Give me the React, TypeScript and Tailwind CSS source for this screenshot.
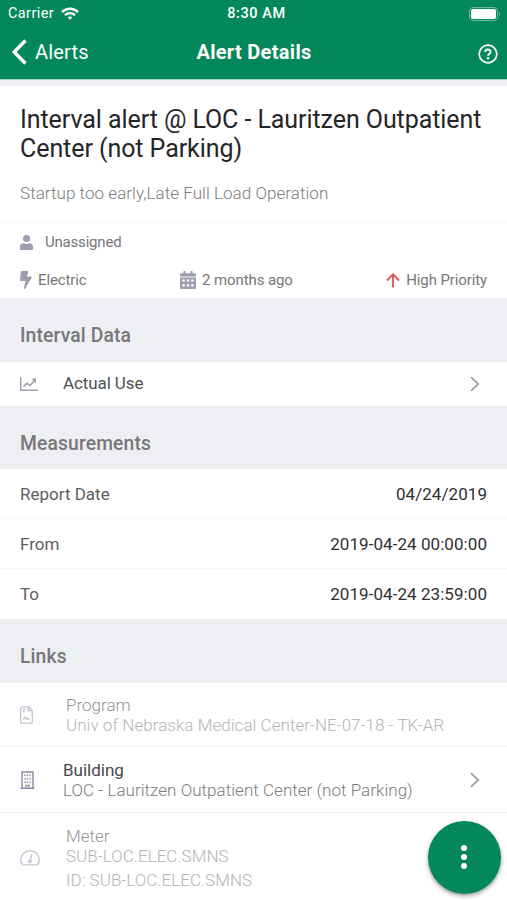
import React from 'react';

interface SectionHeaderProps {
  title: string;
  className: string;
}

interface MeasurementProps {
  label: string;
  value: string;
}

interface LinkRowProps {
  icon: React.ReactNode;
  title: string;
  lines: string[];
  className: string;
  disabled?: boolean;
}

const measurements: MeasurementProps[] = [
  { label: 'Report Date', value: '04/24/2019' },
  { label: 'From', value: '2019-04-24 00:00:00' },
  { label: 'To', value: '2019-04-24 23:59:00' },
];

const WifiIcon = () => (
  <svg width="18" height="13" viewBox="0 0 18 13" fill="none" stroke="#fff" strokeWidth="2.4">
    <path d="M1 5c4.7-4.4 11.3-4.4 16 0" />
    <path d="M4 8.2c3-2.7 7-2.7 10 0" />
    <path d="M6.6 10.3c1.5-1.2 3.3-1.2 4.8 0L9 12.8z" fill="#fff" stroke="none" />
  </svg>
);

const BatteryIcon = () => (
  <svg width="32" height="14" viewBox="0 0 32 14" fill="none">
    <rect x=".5" y=".5" width="28" height="13" rx="3.5" stroke="#6fb79c" />
    <rect x="2" y="2" width="25" height="10" rx="2" fill="#fff" />
    <path d="M30 5c1.6.5 1.6 3.5 0 4z" fill="#6fb79c" />
  </svg>
);

const HelpIcon = () => (
  <svg width="20" height="20" viewBox="0 0 20 20" fill="none" stroke="#fff">
    <circle cx="10" cy="10" r="8.8" strokeWidth="1.7" />
    <path d="M7.2 8C7.3 4.6 12.8 4.9 12.6 8c-.1 1.7-2.5 1.8-2.5 3.7" strokeWidth="2" />
    <circle cx="10.1" cy="14.2" r="1.3" fill="#fff" stroke="none" />
  </svg>
);

const PersonIcon = () => (
  <svg width="13" height="15" viewBox="0 0 13 15" fill="#9d9db1">
    <circle cx="6.5" cy="3.6" r="3.5" />
    <path d="M0 14.3v-2.5C0 9.6 1.5 8.3 3.6 8.3c1.8.8 4 .8 5.8 0 2.1 0 3.6 1.3 3.6 3.5v2.5c0 .4-.3.7-.7.7H.7c-.4 0-.7-.3-.7-.7z" />
  </svg>
);

const BoltIcon = () => (
  <svg width="12" height="18" viewBox="0 0 12 18" fill="#9d9db1">
    <path d="M1.5 0h6c.6 0 .9.4.7 1L7 5.4h4c.7 0 1 .6.7 1.1L5.3 17.4c-.5.9-1.6.5-1.4-.4L5.4 10H1C.3 10 0 9.6.1 9L.8.7C.9.2 1.1 0 1.5 0z" />
  </svg>
);

const CalendarIcon = () => (
  <svg width="16" height="18" viewBox="0 0 16 18" fill="#9d9db1">
    <path d="M1.5 2.3h2V.5c0-.3.2-.5.5-.5h1c.3 0 .5.2.5.5v1.8h5V.5c0-.3.2-.5.5-.5h1c.3 0 .5.2.5.5v1.8h2c.9 0 1.5.7 1.5 1.6v1.5H0V3.9c0-.9.6-1.6 1.5-1.6z" />
    <path
      fillRule="evenodd"
      d="M0 6.5h16v9.9c0 .9-.7 1.6-1.6 1.6H1.6C.7 18 0 17.3 0 16.4zM2.3 8.6v2.2h2.5V8.6zM6.75 8.6v2.2h2.5V8.6zM11.2 8.6v2.2h2.5V8.6zM2.3 13.2v2.2h2.5v-2.2zM6.75 13.2v2.2h2.5v-2.2zM11.2 13.2v2.2h2.5v-2.2z"
    />
  </svg>
);

const ArrowUpIcon = () => (
  <svg width="14" height="15" viewBox="0 0 14 15" fill="none" stroke="#dc5550" strokeWidth="1.8">
    <path d="M7 14.5V1.5M1 7.5l6-6.2 6 6.2" />
  </svg>
);

const ChartIcon = () => (
  <svg width="18" height="14" viewBox="0 0 18 14" fill="none" stroke="#9d9da8" strokeWidth="1.5">
    <path d="M.7 0v13.2H18" />
    <path d="M3.5 9.8l3.5-3.5 3 2.2 4.5-4.7" />
    <path d="M11.3 1.5H16v4.7z" fill="#9d9da8" stroke="none" />
  </svg>
);

const ProgramIcon = () => (
  <svg width="13" height="18" viewBox="0 0 13 18" fill="none" stroke="#9d9db1" strokeWidth="1.3">
    <path d="M8.3.8H2C1.2.8.7 1.3.7 2v14c0 .8.5 1.2 1.3 1.2h9c.8 0 1.3-.5 1.3-1.2V4.8zM8.3.8v4h4" />
    <path d="M2.7 3.5h3M2.7 5.7h2" />
    <path d="M3.3 13.8l1.9-2.6 1.6 2.1 1-.9 1.3 1.4" />
  </svg>
);

const BuildingIcon = () => (
  <svg width="15" height="18" viewBox="0 0 15 18" fill="none" stroke="#8c8ca4">
    <path d="M2 17V1h11v16M.5 17.2h14" strokeWidth="1.4" />
    <path d="M5 3.5v8.8M7.500 3.5v8.8M10 3.5v8.8" strokeWidth="1.4" strokeDasharray="1.5 2" />
    <path d="M6 17v-2.7h3V17" strokeWidth="1.2" />
  </svg>
);

const MeterIcon = () => (
  <svg width="20" height="16" viewBox="0 0 20 16" fill="none" stroke="#9d9db1" strokeWidth="1.4">
    <path d="M3 14.9C1.4 13.5.7 11.8.7 9.9.7 4.8 4.8.7 10 .7s9.3 4.1 9.3 9.2c0 1.9-.7 3.6-2.3 5z" />
    <path d="M11.9 4.2l-1.7 6.3" strokeWidth="1.5" />
    <circle cx="9.8" cy="11.5" r="1.3" />
  </svg>
);

const Chevron = () => (
  <svg width="10" height="16" viewBox="0 0 10 16" fill="none" stroke="#a0a0a0" strokeWidth="1.8">
    <path d="M1 1.2L8.2 8 1 14.8" />
  </svg>
);

const SectionHeader: React.FC<SectionHeaderProps> = ({ title, className }) => (
  <div className={`bg-[#edeff3] px-5 ${className}`}>
    <h2 className="pt-[26px] text-[19.3px] leading-6 font-medium tracking-[0.14px] text-[#77777a]">
      {title}
    </h2>
  </div>
);

const LinkRow: React.FC<LinkRowProps> = ({ icon, title, lines, className, disabled }) => (
  <div className={`flex items-center pl-5 pr-[27px] ${className}`}>
    <div className={disabled ? 'w-[46px] opacity-60' : 'w-[43px]'}>{icon}</div>
    <div className="flex-1 whitespace-nowrap">
      <div className={`text-[17px] leading-5 ${disabled ? 'font-light text-[#949494]' : 'text-[#48484a]'}`}>
        {title}
      </div>
      {lines.map((line, index) => (
        <div
          key={line}
          className={`text-[17px] font-light tracking-[0.04px] ${index > 0 ? 'leading-7' : 'leading-5'} ${
            disabled ? 'text-[#b4b4b4]' : 'text-[#7c7c7c]'
          }`}
        >
          {line}
        </div>
      ))}
    </div>
    {!disabled && <Chevron />}
  </div>
);

export default function App() {
  return (
    <div className="h-[900px] w-full overflow-hidden bg-white font-[Roboto,sans-serif]">
      <header className="h-[79px] bg-[#04875a] text-white">
        <div className="grid h-[27px] grid-cols-3 items-center pl-2 pr-[6px] text-[14.5px]">
          <div className="flex items-center gap-[7px] tracking-[0.4px]">
            Carrier
            <WifiIcon />
          </div>
          <div className="pt-px pl-1 text-center font-medium tracking-[0.6px]">8:30 AM</div>
          <div className="flex justify-end">
            <BatteryIcon />
          </div>
        </div>
        <div className="grid h-[50px] grid-cols-3 items-center pl-3 pr-[9px]">
          <div className="flex items-center gap-2 text-[20px] tracking-[0.2px]">
            <svg width="15" height="26" viewBox="0 0 15 26" fill="none" stroke="#fff" strokeWidth="3.4">
              <path d="M13.5 1.5L2.2 13l11.3 11.5" />
            </svg>
            Alerts
          </div>
          <h1 className="pr-[2px] text-center text-[20px] font-bold tracking-[0.3px] whitespace-nowrap">
            Alert Details
          </h1>
          <div className="flex justify-end pt-1">
            <HelpIcon />
          </div>
        </div>
      </header>

      <div className="h-[7px] border-t border-[#9ed1be] bg-[#edeff3]" />

      <div className="h-[137px] border-b border-[#f5f5f6] px-5 pt-[19px]">
        <div className="text-[25px] leading-[29px] tracking-[-0.07px] whitespace-nowrap text-[#252527]">
          Interval alert @ LOC - Lauritzen Outpatient
          <br />
          Center (not Parking)
        </div>
        <div className="pt-[18px] text-[17px] leading-6 font-light tracking-[0.05px] text-[#7c7c7c]">
          Startup too early,Late Full Load Operation
        </div>
      </div>

      <div className="flex h-[38px] items-center gap-3 pl-5 text-[15px] tracking-[-0.2px] text-[#77777a]">
        <PersonIcon />
        Unassigned
      </div>
      <div className="flex h-[37px] items-center justify-between pt-px pl-5 pr-5 text-[15px] tracking-[-0.11px] text-[#77777a]">
        <div className="flex items-center gap-1.5">
          <BoltIcon />
          Electric
        </div>
        <div className="flex items-center gap-1.5">
          <CalendarIcon />
          2 months ago
        </div>
        <div className="flex items-center gap-1.5">
          <ArrowUpIcon />
          High Priority
        </div>
      </div>

      <SectionHeader title="Interval Data" className="h-16" />
      <div className="flex h-11 items-center pl-5 pr-[27px]">
        <div className="w-[43px]">
          <ChartIcon />
        </div>
        <div className="flex-1 text-[17px] tracking-[-0.1px] text-[#505052]">Actual Use</div>
        <Chevron />
      </div>

      <SectionHeader title="Measurements" className="h-[63px]" />
      <div className="divide-y divide-[#f6f6f7]">
        {measurements.map(({ label, value }) => (
          <div key={label} className="flex h-[50px] items-center justify-between px-5 pt-0.5 text-[17px]">
            <span className="text-[#5e5e60]">{label}</span>
            <span className="tracking-[0.06px] text-[#303032]">{value}</span>
          </div>
        ))}
      </div>

      <SectionHeader title="Links" className="h-16" />
      <div className="divide-y divide-[#f1f2f3]">
        <LinkRow
          icon={<ProgramIcon />}
          title="Program"
          lines={['Univ of Nebraska Medical Center-NE-07-18 - TK-AR']}
          className="h-16"
          disabled
        />
        <LinkRow
          icon={<BuildingIcon />}
          title="Building"
          lines={['LOC - Lauritzen Outpatient Center (not Parking)']}
          className="h-[66px]"
        />
        <LinkRow
          icon={
            <div className="pb-1">
              <MeterIcon />
            </div>
          }
          title="Meter"
          lines={['SUB-LOC.ELEC.SMNS', 'ID: SUB-LOC.ELEC.SMNS']}
          className="h-[90px] pt-[3px]"
          disabled
        />
      </div>

      <button className="fixed right-[6px] bottom-[6px] flex h-[73px] w-[73px] items-center justify-center rounded-full bg-[#04875a] pr-[2px] pb-[2px] shadow-[0_2px_4px_rgba(0,0,0,0.4)]">
        <svg width="6" height="24" viewBox="0 0 6 24" fill="#fff">
          <circle cx="3" cy="3" r="3" />
          <circle cx="3" cy="12" r="3" />
          <circle cx="3" cy="21" r="3" />
        </svg>
      </button>
    </div>
  );
}
